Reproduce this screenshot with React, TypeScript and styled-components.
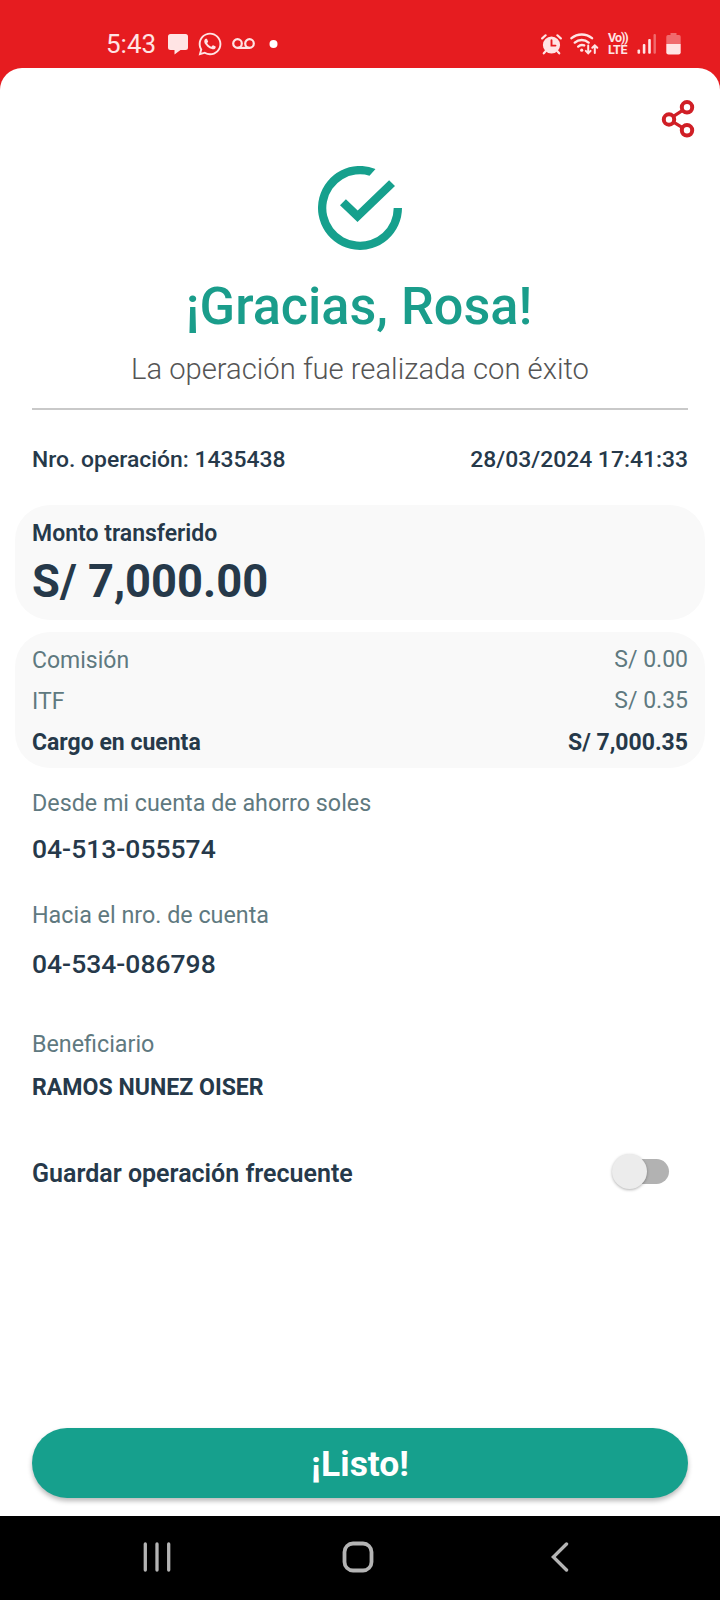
import React, { useState } from "react";
import styled, { createGlobalStyle, css } from "styled-components";
import { FaWhatsapp } from "react-icons/fa";

const color = {
  red: "#e61c20",
  shareRed: "#d01f26",
  teal: "#16a08d",
  tealTitle: "#1a9d8b",
  ink: "#26394a",
  muted: "#5f7980",
  card: "#f9f9f9",
  status: "#ffe4e4",
};

const GlobalStyle = createGlobalStyle`
  *, *::before, *::after { box-sizing: border-box; }
  body { margin: 0; background: #fff; font-family: Roboto, "Liberation Sans", sans-serif; }
  h1, p, dl, dt, dd { margin: 0; font-weight: inherit; }
`;

const Screen = styled.div`
  width: 720px;
  height: 1600px;
  display: flex;
  flex-direction: column;
  background: ${color.red};
  overflow: hidden;
`;

const StatusBar = styled.header`
  height: 68px;
  flex: none;
  padding: 18px 39px 0 106px;
  display: flex;
  justify-content: space-between;
  align-items: flex-start;
  color: ${color.status};
`;

const StatusGroup = styled.div<{ $gap: number }>`
  height: 52px;
  display: flex;
  align-items: center;
  gap: ${(p) => p.$gap}px;
  svg { flex: none; display: block; }
`;

const Clock = styled.span`
  width: 53px;
  font-size: 26px;
  line-height: 52px;
`;

const VoLte = styled.span`
  display: flex;
  flex-direction: column;
  width: 21px;
  font-size: 12.5px;
  line-height: 12px;
  font-weight: 700;
  white-space: nowrap;
`;

const VoLteLine = styled.span<{ $tracking: number }>`
  letter-spacing: ${(p) => p.$tracking}px;
`;

const Sheet = styled.main`
  flex: 1;
  min-height: 0;
  display: flex;
  flex-direction: column;
  padding: 32px 32px 18px;
  background: #fff;
  border-radius: 22px 22px 0 0;
`;

const IconButton = styled.button`
  align-self: flex-end;
  width: 34px;
  height: 38px;
  margin-right: -7px;
  padding: 0;
  border: 0;
  background: none;
  svg { display: block; }
`;

const Hero = styled.section`
  display: flex;
  flex-direction: column;
  align-items: center;
  padding: 28px 0 21px;
  border-bottom: 2px solid #c9c9c9;
`;

const Title = styled.h1`
  margin: 27px 2px 0 0;
  font-size: 52.2px;
  line-height: 60px;
  font-weight: 500;
  color: ${color.tealTitle};
`;

const Subtitle = styled.p`
  margin-top: 14px;
  font-size: 29.2px;
  line-height: 36px;
  font-weight: 300;
  color: #555;
`;

const OperationMeta = styled.div`
  display: flex;
  justify-content: space-between;
  margin: 36px 0 31px;
  font-size: 22.9px;
  line-height: 28px;
  font-weight: 480;
  color: ${color.ink};
`;

const cardSurface = css`
  margin: 0 -17px;
  border-radius: 35px;
  background: ${color.card};
  color: ${color.ink};
`;

const AmountCard = styled.section`
  ${cardSurface}
  height: 115px;
  padding: 15px 17px 0;
`;

const AmountLabel = styled.p`
  font-size: 23px;
  line-height: 28px;
  font-weight: 600;
`;

const Amount = styled.p`
  margin-top: 7px;
  font-size: 45.3px;
  line-height: 54px;
  font-weight: 700;
`;

const ChargesCard = styled.dl`
  ${cardSurface}
  margin-top: 12px;
  padding: 8px 17px 5px;
`;

const ChargeRow = styled.div<{ $total?: boolean }>`
  display: flex;
  justify-content: space-between;
  font-size: 23px;
  line-height: 41px;
  font-weight: ${(p) => (p.$total ? 700 : 400)};
  color: ${(p) => (p.$total ? color.ink : color.muted)};
  dd { line-height: ${(p) => (p.$total ? 41 : 39)}px; }
`;

const Detail = styled.div<{ $top: number; $gap: number }>`
  display: flex;
  flex-direction: column;
  gap: ${(p) => p.$gap}px;
  margin-top: ${(p) => p.$top}px;
`;

const DetailLabel = styled.span`
  font-size: 23.3px;
  line-height: 28px;
  color: ${color.muted};
`;

const AccountNumber = styled.span`
  font-size: 26.5px;
  line-height: 34px;
  font-weight: 480;
  color: ${color.ink};
`;

const Beneficiary = styled.span`
  font-size: 23.1px;
  line-height: 28px;
  font-weight: 700;
  color: ${color.ink};
`;

const SaveRow = styled.div`
  display: flex;
  justify-content: space-between;
  align-items: center;
  height: 40px;
  margin-top: 49px;
  padding-right: 19px;
`;

const SaveLabel = styled.span`
  padding-top: 6px;
  font-size: 25px;
  line-height: 30px;
  font-weight: 600;
  color: ${color.ink};
`;

const Switch = styled.button<{ $on: boolean }>`
  display: flex;
  align-items: center;
  justify-content: ${(p) => (p.$on ? "flex-end" : "flex-start")};
  width: 56px;
  height: 25px;
  padding: 0;
  border: 0;
  border-radius: 13px;
  background: ${(p) => (p.$on ? "#8accc4" : "#b2b2b2")};
`;

const Thumb = styled.span`
  flex: none;
  width: 35px;
  height: 35px;
  margin: 0 -1px;
  border-radius: 50%;
  background: #ececec;
  box-shadow: 0 1px 3px rgba(0, 0, 0, 0.3);
`;

const DoneButton = styled.button`
  height: 70px;
  margin-top: auto;
  padding: 3px 0 0;
  border: 0;
  border-radius: 35px;
  background: ${color.teal};
  box-shadow: 0 3px 5px rgba(0, 0, 0, 0.28);
  color: #fff;
  font: 700 35.4px/67px Roboto, sans-serif;
`;

const NavBar = styled.nav`
  flex: none;
  height: 84px;
  padding: 0 151px 2px 143px;
  display: grid;
  grid-template-columns: 28px 366px 18px;
  justify-content: space-between;
  align-items: center;
  background: #000;
`;

const NavHome = styled.span`
  justify-self: center;
  height: 32px;
  margin-right: 6px;
`;

const ChatIcon = () => (
  <svg width="20" height="21" viewBox="0 0 20 21" fill="currentColor">
    <path d="M2.500 0h15A2.500 2.500 0 0 1 20 2.500v11a2.500 2.500 0 0 1-2.500 2.500H12.500L6.500 20.500V16h-4A2.500 2.500 0 0 1 0 13.500v-11A2.500 2.500 0 0 1 2.500 0z" />
  </svg>
);

const VoicemailIcon = () => (
  <svg width="23" height="12" viewBox="0 0 23 12" fill="none" stroke="currentColor" strokeWidth="2.200">
    <circle cx="5.500" cy="5.500" r="4.300" />
    <circle cx="17.500" cy="5.500" r="4.300" />
    <path d="M5.500 9.900h12" />
  </svg>
);

const DotIcon = () => (
  <svg width="19" height="8" viewBox="0 0 19 8" fill="#fff">
    <circle cx="9.500" cy="4" r="4" />
  </svg>
);

const AlarmIcon = () => (
  <svg width="21" height="21" viewBox="0 0 21 21" fill="none" strokeLinecap="round">
    <circle cx="10.500" cy="11" r="8.600" fill="currentColor" />
    <path d="M1.200 4.400 4.600 1.300M19.800 4.400 16.400 1.300M4.800 17 2.800 19.300M16.200 17l2 2.300" stroke="currentColor" strokeWidth="2.200" />
    <path d="M10.500 6.200v5.400h4" stroke={color.red} strokeWidth="1.900" />
  </svg>
);

const WifiIcon = () => (
  <svg width="30" height="22" viewBox="0 0 30 22" fill="none" stroke="currentColor" strokeWidth="2.400" strokeLinecap="round">
    <path d="M1.500 5.200a16 16 0 0 1 20.500 0M4.800 9.600a10.500 10.500 0 0 1 13.800 0M8.200 13.600a5.800 5.800 0 0 1 6-1.200" />
    <circle cx="11.700" cy="17.200" r="1.600" fill="currentColor" stroke="none" />
    <path d="M18.200 12.500v7.600M15.800 17.900l2.400 2.500 2.400-2.500M24.800 20v-7M22.300 14.800l2.500-2.500 2.500 2.500" strokeWidth="2" />
  </svg>
);

const SignalIcon = () => (
  <svg width="21" height="20" viewBox="0 0 21 20" fill="currentColor">
    <rect x="0.500" y="15.500" width="2.600" height="4.200" rx="1" />
    <rect x="5.800" y="10" width="2.600" height="9.700" rx="1" />
    <rect x="11.200" y="5" width="2.600" height="14.700" rx="1" />
    <rect x="16.500" y="0" width="2.400" height="19.700" rx="1" opacity="0.400" />
  </svg>
);

const BatteryIcon = () => (
  <svg width="15" height="22" viewBox="0 0 15 22" fill="currentColor">
    <path d="M4.500 0h6v2H13a1.700 1.700 0 0 1 1.700 1.700V11H.3V3.700A1.700 1.700 0 0 1 2 2h2.500z" opacity="0.400" />
    <path d="M.3 11h14.400v8.300a2.200 2.200 0 0 1-2.200 2.200h-10a2.200 2.200 0 0 1-2.200-2.200z" />
  </svg>
);

const ShareIcon = () => (
  <svg width="34" height="38" viewBox="0 0 34 38" fill="none" stroke={color.shareRed} strokeWidth="4">
    <circle cx="26" cy="7.300" r="5.200" />
    <circle cx="8" cy="19.500" r="5.200" />
    <circle cx="26" cy="30.300" r="5.200" />
    <path d="M12.400 16.400 21.600 10.400M12.500 22.200 21.500 27.600" strokeWidth="3.200" />
  </svg>
);

const SuccessIcon = () => (
  <svg width="84" height="84" viewBox="0 0 84 84" fill={color.teal}>
    <path d="M84 42A42 42 0 1 1 57.500 2.900L51.500 9.700A33.700 33.700 0 1 0 75.700 42z" />
    <path d="M22 39.200 27.900 33.300 39.700 44.600 71.100 14.200 77 20.100 39.500 56z" />
  </svg>
);

const RecentsIcon = () => (
  <svg width="28" height="30" viewBox="0 0 28 30" stroke="#b4b4b4" strokeWidth="3.300" strokeLinecap="round">
    <path d="M2.300 2v26M14 2v26M25.700 2v26" />
  </svg>
);

const HomeIcon = () => (
  <svg width="32" height="32" viewBox="0 0 32 32" fill="none" stroke="#b4b4b4" strokeWidth="3.800">
    <rect x="2.500" y="2.500" width="27" height="27" rx="8.500" />
  </svg>
);

const BackIcon = () => (
  <svg width="18" height="30" viewBox="0 0 18 30" fill="none" stroke="#b4b4b4" strokeWidth="3.400" strokeLinecap="round">
    <path d="M15.500 2 2.300 15 15.500 28" />
  </svg>
);

const charges = [
  { label: "Comisión", value: "S/ 0.00" },
  { label: "ITF", value: "S/ 0.35" },
  { label: "Cargo en cuenta", value: "S/ 7,000.35", total: true },
];

export default function App() {
  const [saved, setSaved] = useState(false);

  return (
    <>
      <GlobalStyle />
      <Screen>
        <StatusBar>
          <StatusGroup $gap={9}>
            <Clock>5:43</Clock>
            <ChatIcon />
            <FaWhatsapp size={26} />
            <VoicemailIcon />
            <DotIcon />
          </StatusGroup>
          <StatusGroup $gap={8}>
            <AlarmIcon />
            <WifiIcon />
            <VoLte>
              <VoLteLine $tracking={-1}>Vo))</VoLteLine>
              <VoLteLine $tracking={-0.3}>LTE</VoLteLine>
            </VoLte>
            <SignalIcon />
            <BatteryIcon />
          </StatusGroup>
        </StatusBar>

        <Sheet>
          <IconButton aria-label="Compartir">
            <ShareIcon />
          </IconButton>

          <Hero>
            <SuccessIcon />
            <Title>¡Gracias, Rosa!</Title>
            <Subtitle>La operación fue realizada con éxito</Subtitle>
          </Hero>

          <OperationMeta>
            <span>Nro. operación: 1435438</span>
            <span>28/03/2024 17:41:33</span>
          </OperationMeta>

          <AmountCard>
            <AmountLabel>Monto transferido</AmountLabel>
            <Amount>S/ 7,000.00</Amount>
          </AmountCard>

          <ChargesCard>
            {charges.map((c) => (
              <ChargeRow key={c.label} $total={c.total}>
                <dt>{c.label}</dt>
                <dd>{c.value}</dd>
              </ChargeRow>
            ))}
          </ChargesCard>

          <Detail $top={21} $gap={15}>
            <DetailLabel>Desde mi cuenta de ahorro soles</DetailLabel>
            <AccountNumber>04-513-055574</AccountNumber>
          </Detail>
          <Detail $top={35} $gap={18}>
            <DetailLabel>Hacia el nro. de cuenta</DetailLabel>
            <AccountNumber>04-534-086798</AccountNumber>
          </Detail>
          <Detail $top={49} $gap={16}>
            <DetailLabel>Beneficiario</DetailLabel>
            <Beneficiary>RAMOS NUNEZ OISER</Beneficiary>
          </Detail>

          <SaveRow>
            <SaveLabel>Guardar operación frecuente</SaveLabel>
            <Switch $on={saved} role="switch" aria-checked={saved} onClick={() => setSaved(!saved)}>
              <Thumb />
            </Switch>
          </SaveRow>

          <DoneButton>¡Listo!</DoneButton>
        </Sheet>

        <NavBar>
          <RecentsIcon />
          <NavHome>
            <HomeIcon />
          </NavHome>
          <BackIcon />
        </NavBar>
      </Screen>
    </>
  );
}
